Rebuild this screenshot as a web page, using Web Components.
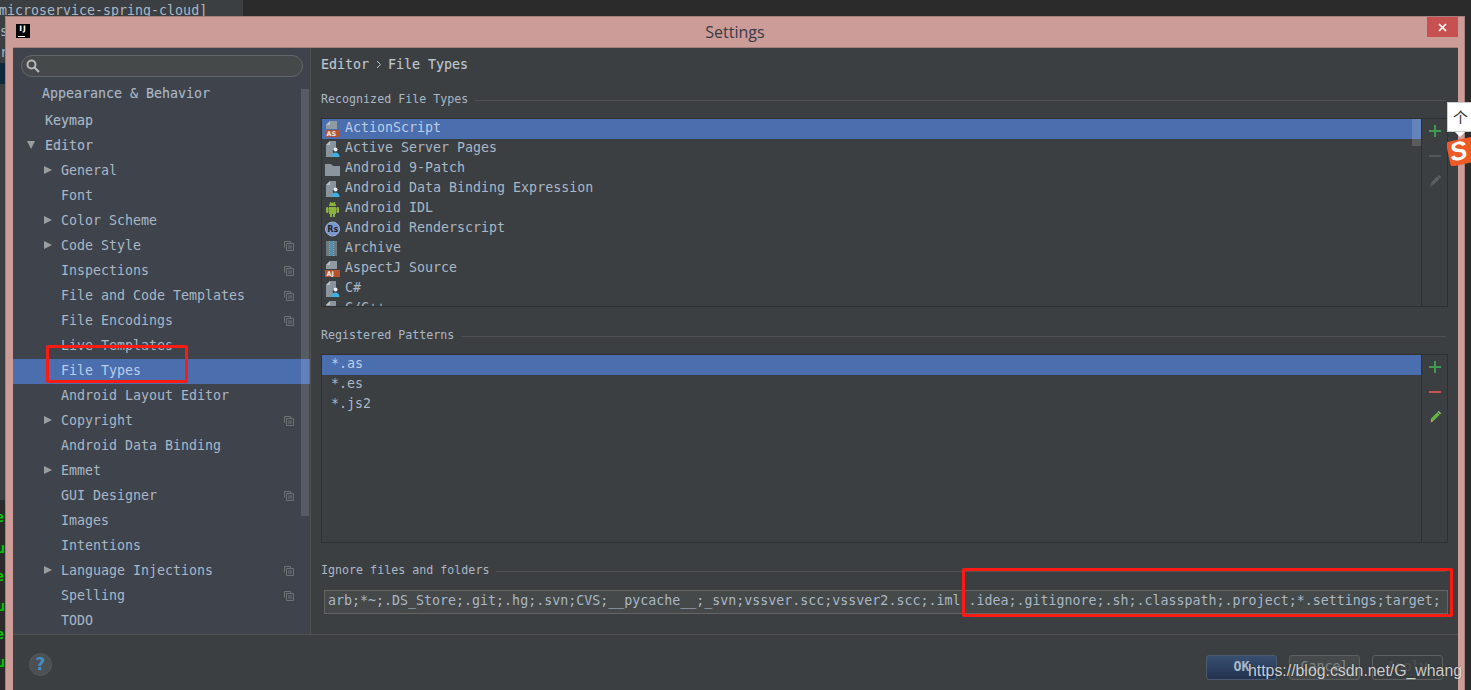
<!DOCTYPE html>
<html>
<head>
<meta charset="utf-8">
<title>Settings</title>
<style>
  html, body { margin: 0; height: 690px; overflow: hidden; background: #2b2b2b; }
  body { position: relative; font-family: "DejaVu Sans Mono", monospace; }
</style>
</head>
<body>
<ide-backdrop></ide-backdrop>
<settings-window>
  <settings-sidebar slot="sidebar"></settings-sidebar>
  <file-types-panel slot="panel"></file-types-panel>
  <dialog-footer slot="footer"></dialog-footer>
</settings-window>
<ime-badge></ime-badge>
<span-marker style="left:46px;top:345px;width:142px;height:38px"></span-marker>
<span-marker style="left:962px;top:568px;width:491px;height:49px"></span-marker>
<blog-watermark>https://blog.csdn.net/G_whang</blog-watermark>

<script>
const DOC = '<path d="M5 0h7v8H1V4z" fill="#8f9aa3"/><path d="M5 0v4H1z" fill="#b9c1c7"/>'
const PERSON_DOC = '<path d="M5 0h6v6.5a4 4 0 0 0-3 5.5v4H1V4z" fill="#8a949c"/><path d="M5 0v4H1z" fill="#b9c1c7"/><circle cx="10.5" cy="8.5" r="2" fill="#e8edf0"/><path d="M6.5 16c0-3 1.800-4.500 4-4.500s4 1.500 4 4.500z" fill="#3fb0e0"/>'
const label = t => `${DOC}<rect y="9" width="15" height="7" fill="#b4532e"/><text x="1.500" y="15" font-size="6.500" font-weight="bold" font-family="DejaVu Sans" fill="#e8e8e8">${t}</text>`
const ICONS = {
  as: `<svg width="16" height="16" viewBox="0 0 16 16">${label('AS')}</svg>`,
  aj: `<svg width="16" height="16" viewBox="0 0 16 16">${label('AJ')}</svg>`,
  server: `<svg width="16" height="16" viewBox="0 0 16 16">${PERSON_DOC}</svg>`,
  folder: `<svg width="16" height="16" viewBox="0 0 16 16"><path d="M0 3h6l2 2h7v10H0z" fill="#8a959e"/></svg>`,
  android: `<svg width="16" height="16" viewBox="0 0 16 16"><path d="M4 5a3.500 3.500 0 0 1 7 0z" fill="#8cb43c"/><path d="M5 1l1 2M10 1l-1 2" stroke="#8cb43c"/><rect x="4" y="6" width="7" height="7" fill="#8cb43c"/><rect x="1" y="6" width="2.500" height="6" rx="1.200" fill="#8cb43c"/><rect x="11.500" y="6" width="2.500" height="6" rx="1.200" fill="#8cb43c"/><rect x="5" y="12" width="2" height="4" fill="#8cb43c"/><rect x="8" y="12" width="2" height="4" fill="#8cb43c"/></svg>`,
  rs: `<svg width="16" height="16" viewBox="0 0 16 16"><circle cx="7.500" cy="8" r="7" fill="#7b98cc" stroke="#9cb0d4"/><text x="2.300" y="11" font-size="8" font-weight="bold" font-family="DejaVu Sans" fill="#20242c">Rs</text></svg>`,
  archive: `<svg width="16" height="16" viewBox="0 0 16 16"><rect x="1" width="11" height="15" fill="#6f7a80"/><rect x="5.500" width="2" height="15" fill="#2f9bd0"/><path d="M4.500 0v15M8.500 0v15" stroke="#5cc0ea" stroke-dasharray="1 1"/></svg>`
}

const SIDEBAR_ROWS = [
  { label: 'Appearance & Behavior', indent: 'a', bold: true },
  { label: 'Keymap', indent: 'top', bold: true },
  { label: 'Editor', indent: 'top', bold: true, open: true },
  { label: 'General', arrow: true },
  { label: 'Font' },
  { label: 'Color Scheme', arrow: true },
  { label: 'Code Style', arrow: true, copy: true },
  { label: 'Inspections', copy: true },
  { label: 'File and Code Templates', copy: true },
  { label: 'File Encodings', copy: true },
  { label: 'Live Templates' },
  { label: 'File Types', selected: true },
  { label: 'Android Layout Editor' },
  { label: 'Copyright', arrow: true, copy: true },
  { label: 'Android Data Binding' },
  { label: 'Emmet', arrow: true },
  { label: 'GUI Designer', copy: true },
  { label: 'Images' },
  { label: 'Intentions' },
  { label: 'Language Injections', arrow: true, copy: true },
  { label: 'Spelling', copy: true },
  { label: 'TODO' }
]

const FILE_TYPES = [
  ['as', 'ActionScript'],
  ['server', 'Active Server Pages'],
  ['folder', 'Android 9-Patch'],
  ['server', 'Android Data Binding Expression'],
  ['android', 'Android IDL'],
  ['rs', 'Android Renderscript'],
  ['archive', 'Archive'],
  ['aj', 'AspectJ Source'],
  ['server', 'C#'],
  ['server', 'C/C++']
]

class IdeBackdrop extends HTMLElement {
  constructor () {
    super()
    this.attachShadow({ mode: 'open' }).innerHTML = /* html */`
    <style>
      :host { display: block; position: absolute; inset: 0; overflow: hidden; }
      .tree { position: absolute; left: 0; top: 0; width: 243px; height: 100%; background: #3c3f41; }
      .line { position: absolute; left: 0; font: 13.3px/16px "DejaVu Sans Mono", monospace; color: #a9b7c6; white-space: nowrap; }
      .selected { position: absolute; left: 0; top: 63px; width: 5px; height: 21px; background: #0d293e; }
      .editor { position: absolute; left: 0; top: 500px; width: 5px; height: 190px; background: #2b2b2b; }
      .g { color: #00c800; font-weight: bold; }
    </style>
    <div class="tree"></div>
    <div class="selected"></div>
    <div class="editor"></div>
    <div class="line" style="top:3px;left:-1px">microservice-spring-cloud]</div>
    <div class="line" style="top:24px;left:0">s</div>
    <div class="line" style="top:45px;left:0">r</div>
    <div class="line g" style="top:510px;left:-4px">e</div>
    <div class="line g" style="top:541px;left:-3px">u</div>
    <div class="line g" style="top:569px;left:-4px">e</div>
    <div class="line g" style="top:599px;left:-3px">u</div>
    <div class="line g" style="top:627px;left:-4px">e</div>
    <div class="line g" style="top:655px;left:-3px">u</div>
    `
  }
}

class SettingsWindow extends HTMLElement {
  constructor () {
    super()
    this.attachShadow({ mode: 'open' }).innerHTML = /* html */`
    <style>
      :host {
        position: absolute; left: 5px; top: 16px; width: 1460px; height: 674px;
        box-sizing: border-box; display: flex; flex-direction: column;
        background: #cc9d98; border: 1px solid #a5807c; border-bottom: 0;
      }
      .title { height: 29px; flex: none; display: flex; align-items: center; justify-content: center; position: relative;
        font: 16px "Open Sans", sans-serif; color: #3a3a44; }
      .logo { position: absolute; left: 10px; top: 7px; width: 14px; height: 14px; background: #000; color: #fff;
        font: bold 7.5px/10px "DejaVu Sans", sans-serif; letter-spacing: 1px; text-align: center; }
      .logo i { position: absolute; left: 2px; bottom: 1px; width: 7px; height: 1px; background: #fff; }
      .close { position: absolute; right: 6px; top: 0; width: 31px; height: 20px; background: #c75050;
        display: flex; align-items: center; justify-content: center; }
      .body { flex: 1; min-height: 0; margin: 1px 6px 0 7px; border-top: 1px solid #a5807c; display: flex; flex-direction: column; background: #3c3f41; }
      .main { display: flex; height: 586px; flex: none; border-bottom: 1px solid #515151; }
    </style>
    <div class="title">
      <div class="logo">IJ<i></i></div>
      Settings
      <div class="close"><svg width="9" height="9" viewBox="0 0 9 9"><path d="M1 1l7 7M8 1l-7 7" stroke="#fff" stroke-width="1.700"/></svg></div>
    </div>
    <div class="body">
      <div class="main">
        <slot name="sidebar"></slot>
        <slot name="panel"></slot>
      </div>
      <slot name="footer"></slot>
    </div>
    `
  }
}

class SettingsSidebar extends HTMLElement {
  constructor () {
    super()
    const rows = SIDEBAR_ROWS.map(r => {
      const cls = ['row', r.selected ? 'sel' : '', r.indent === 'a' ? 'first' : '', r.indent === 'top' ? 'top' : '', r.bold ? 'bold' : ''].join(' ')
      let arrow = ''
      if (r.arrow) arrow = '<span class="arr"></span>'
      if (r.open) arrow = '<span class="down"></span>'
      const copy = r.copy ? `<svg class="copy" width="10" height="10" viewBox="0 0 10 10"><path d="M.5 6.500v-6h6v2" fill="none" stroke="#6e7276"/><path d="M2.500 2.500h7v7h-7z" fill="none" stroke="#6e7276"/><path d="M4 5h4M4 7h4" stroke="#6e7276"/></svg>` : ''
      return `<div class="${cls}">${arrow}<span>${r.label.replace('&', '&amp;')}</span>${copy}</div>`
    }).join('')
    this.attachShadow({ mode: 'open' }).innerHTML = /* html */`
    <style>
      :host { display: flex; flex-direction: column; width: 297px; height: 100%; flex: none; background: #3e434c; border-right: 1px solid #515151; position: relative; overflow: hidden;
        font: 13.3px "DejaVu Sans Mono", monospace; color: #a9b7c6; }
      .search { margin: 7px 7px 0 8px; height: 22px; flex: none; box-sizing: border-box; border: 1px solid #63676a; border-radius: 11px; background: #45494a; display: flex; align-items: center; padding-left: 4px; }
      .list { padding-top: 4px; }
      .row { height: 25px; box-sizing: border-box; padding-bottom: 2px; display: flex; align-items: center; padding-left: 48px; position: relative; white-space: nowrap; }
      .first { height: 28px; padding-left: 29px; padding-bottom: 3px; }
      .top { padding-left: 32px; }
      .bold { -webkit-text-stroke: .15px #a9b7c6; }
      .sel { background: #4b6eaf; color: #bbcde8; }
      .arr { position: absolute; left: 31px; top: 7px; border-left: 8px solid #9b9e9f; border-top: 4.5px solid transparent; border-bottom: 4.5px solid transparent; }
      .down { position: absolute; left: 14px; top: 7px; border-top: 8px solid #9b9e9f; border-left: 4.5px solid transparent; border-right: 4.5px solid transparent; }
      .copy { position: absolute; left: 271px; top: 7px; }
      .thumb { position: absolute; left: 288px; top: 41px; width: 8px; height: 427px; background: rgba(255,255,255,.13); }
    </style>
    <div class="search"><svg width="14" height="14" viewBox="0 0 14 14"><circle cx="5.500" cy="5.500" r="4" fill="none" stroke="#b5b8ba" stroke-width="2"/><path d="M8.500 8.500l4.500 4.500" stroke="#b5b8ba" stroke-width="2.200"/></svg></div>
    <div class="list">${rows}</div>
    <div class="thumb"></div>
    `
  }
}

class GroupTitle extends HTMLElement {
  constructor () {
    super()
    this.attachShadow({ mode: 'open' }).innerHTML = /* html */`
    <style>
      :host { display: flex; align-items: center; gap: 7px; font: 11.66px "DejaVu Sans Mono", monospace; color: #a9b7c6; height: 16px; white-space: nowrap; }
      i { flex: 1; height: 1px; background: #515151; margin: 2px 2px 0 0; }
    </style>
    <slot></slot><i></i>
    `
  }
}

class ToolList extends HTMLElement {
  constructor () {
    super()
    const active = this.hasAttribute('active')
    const minus = active ? '#c75450' : '#515658'
    const pencil = active
      ? '<path d="M3 9.500L10 2.500l2.500 2.500-7 7z" fill="#62b543"/><path d="M10.500 2l2.500 2.500 1-1L11.500 1z" fill="#9bd68a"/><path d="M3 9.500l2.500 2.500-2 1z" fill="#e8b060"/><path d="M2 13l1.500 0-1.500 1z" fill="#8a8a8a"/>'
      : '<path d="M3 9.500L10 2.500l2.500 2.500-7 7z" fill="#5c5f61"/><path d="M10.500 2l2.500 2.500 1-1L11.500 1z" fill="#66696b"/><path d="M3 9.500l2.500 2.500-3.500 2z" fill="#545759"/>'
    this.attachShadow({ mode: 'open' }).innerHTML = /* html */`
    <style>
      :host { display: flex; box-sizing: border-box; border: 1px solid #2e3032; font: 13.3px "DejaVu Sans Mono", monospace; color: #a9b7c6; }
      .items { flex: 1; min-width: 0; overflow: hidden; position: relative; }
      .tools { width: 25px; flex: none; border-left: 1px solid #2e3032; display: flex; flex-direction: column; align-items: center; gap: 11px; padding-top: 5px; }
      .tools svg { display: block; }
    </style>
    <div class="items"><slot></slot></div>
    <div class="tools">
      <svg width="14" height="14" viewBox="0 0 14 14"><path d="M7 1v12M1 7h12" stroke="#3e9b4f" stroke-width="2"/></svg>
      <svg width="14" height="14" viewBox="0 0 14 14"><path d="M1 7h12" stroke="${minus}" stroke-width="2"/></svg>
      <svg width="14" height="14" viewBox="0 0 15 15">${pencil}</svg>
    </div>
    `
  }
}

class FileTypeRow extends HTMLElement {
  constructor () {
    super()
    const icon = ICONS[this.getAttribute('icon')] || ''
    this.attachShadow({ mode: 'open' }).innerHTML = /* html */`
    <style>
      :host { display: flex; align-items: center; height: 20px; padding-left: 3px; gap: 4px; white-space: nowrap; }
      :host([selected]) { background: #4b6eaf; color: #bbcde8; }
      :host([plain]) { padding-left: 9px; }
      svg { flex: none; display: block; }
      .t { margin-bottom: 4px; }
    </style>
    ${icon}<span class="t"><slot></slot></span>
    `
  }
}

class FileTypesPanel extends HTMLElement {
  constructor () {
    super()
    const rows = FILE_TYPES.map((t, i) => `<file-type-row icon="${t[0]}" ${i === 0 ? 'selected' : ''}>${t[1]}</file-type-row>`).join('')
    this.attachShadow({ mode: 'open' }).innerHTML = /* html */`
    <style>
      :host { display: flex; flex-direction: column; flex: 1; min-width: 0; padding: 0 10px; height: 100%; box-sizing: border-box; font: 13.3px "DejaVu Sans Mono", monospace; color: #a9b7c6; overflow: hidden; position: relative; }
      .crumb { height: 16px; margin-top: 8px; display: flex; align-items: center; color: #bcc6cf; white-space: nowrap; -webkit-text-stroke: .15px #bcc6cf; }
      .crumb svg { margin: 0 6px 0 7px; }
      group-title { margin-top: 19px; }
      .recognized { height: 189px; margin-top: 11px; flex: none; }
      .recognized-inner { position: relative; }
      .thumb { position: absolute; right: 0; top: 0; width: 9px; height: 27px; background: rgba(255,255,255,.15); }
      .patterns { height: 189px; margin-top: 11px; flex: none; }
      .ignore { margin: 12px 0 0 3px; height: 24px; box-sizing: border-box; border: 1px solid #646464; background: #45494a; display: flex; align-items: center; padding: 0 0 4px 3px; white-space: pre; overflow: hidden; flex: none; color: #a9b7c6; }
    </style>
    <div class="crumb">Editor<svg width="6" height="9" viewBox="0 0 6 9"><path d="M1 1l3.500 3.500L1 8" fill="none" stroke="#bcc6cf"/></svg>File Types</div>
    <group-title>Recognized File Types</group-title>
    <tool-list class="recognized"><div class="recognized-inner">${rows}<div class="thumb"></div></div></tool-list>
    <group-title style="margin-top:20px">Registered Patterns</group-title>
    <tool-list class="patterns" active>
      <file-type-row plain selected>*.as</file-type-row>
      <file-type-row plain>*.es</file-type-row>
      <file-type-row plain>*.js2</file-type-row>
    </tool-list>
    <group-title style="margin-top:19px">Ignore files and folders</group-title>
    <div class="ignore">arb;*~;.DS_Store;.git;.hg;.svn;CVS;__pycache__;_svn;vssver.scc;vssver2.scc;.iml .idea;.gitignore;.sh;.classpath;.project;*.settings;target;</div>
    `
  }
}

class DialogFooter extends HTMLElement {
  constructor () {
    super()
    this.attachShadow({ mode: 'open' }).innerHTML = /* html */`
    <style>
      :host { display: flex; flex: 1; align-items: flex-end; position: relative; padding: 0 15px 10px 15px; font: 13.3px "DejaVu Sans Mono", monospace; }
      .help { position: absolute; left: 16px; top: 18px; width: 23px; height: 23px; box-sizing: border-box; border-radius: 50%; background: #4c5052; border: 1px solid #55595b; color: #3f8fc4; font: bold 17px/21px "DejaVu Sans", sans-serif; text-align: center; }
      .btns { margin-left: auto; display: flex; gap: 12px; }
      .btn { width: 71px; height: 25px; box-sizing: border-box; border: 1px solid #5e6060; border-radius: 3px; background: #3c3f41; color: #4f5456; display: flex; align-items: center; justify-content: center; padding-bottom: 3px; }
      .ok { background: linear-gradient(#384f70, #233350); color: #a9b7c6; font-weight: bold; border-color: #4b5a70; }
      .cancel { background: #45494a; color: #7d8285; }
    </style>
    <div class="help">?</div>
    <div class="btns">
      <div class="btn ok">OK</div>
      <div class="btn cancel">Cancel</div>
      <div class="btn">Apply</div>
    </div>
    `
  }
}

class SpanMarker extends HTMLElement {
  constructor () {
    super()
    this.attachShadow({ mode: 'open' }).innerHTML = /* html */`
    <style>
      :host { position: absolute; box-sizing: border-box; border: 3px solid #fb1b12; border-radius: 2px; pointer-events: none; }
    </style>
    `
  }
}

class ImeBadge extends HTMLElement {
  constructor () {
    super()
    this.attachShadow({ mode: 'open' }).innerHTML = /* html */`
    <style>
      :host { position: absolute; left: 1447px; top: 102px; width: 24px; height: 64px; overflow: hidden; }
      .tip { position: absolute; left: 0; top: 0; width: 30px; height: 30px; background: #fff; border: 1px solid #ccc; box-sizing: border-box; font: 15px/28px "Noto Sans CJK SC", sans-serif; color: #333; padding-left: 5px; }
      .arrow { position: absolute; left: 8px; top: 30px; border-top: 5px solid #fff; border-left: 5px solid transparent; border-right: 5px solid transparent; }
      .s { position: absolute; left: 1px; top: 37px; width: 30px; height: 25px; background: #ee5a24; border-radius: 3px; transform: rotate(-12deg); color: #fff; font: italic bold 26px/23px "Liberation Sans", sans-serif; padding-left: 2px; box-sizing: border-box; }
    </style>
    <div class="tip">个</div>
    <div class="arrow"></div>
    <div class="s">S</div>
    `
  }
}

class BlogWatermark extends HTMLElement {
  constructor () {
    super()
    this.attachShadow({ mode: 'open' }).innerHTML = /* html */`
    <style>
      :host { position: absolute; left: 1248px; top: 661px; font: 15.85px/20px "Liberation Sans", sans-serif; color: rgba(235,235,235,.85); text-shadow: 0 0 2px rgba(0,0,0,.45); white-space: nowrap; }
    </style>
    <slot></slot>
    `
  }
}

customElements.define('ide-backdrop', IdeBackdrop)
customElements.define('settings-window', SettingsWindow)
customElements.define('settings-sidebar', SettingsSidebar)
customElements.define('group-title', GroupTitle)
customElements.define('tool-list', ToolList)
customElements.define('file-type-row', FileTypeRow)
customElements.define('file-types-panel', FileTypesPanel)
customElements.define('dialog-footer', DialogFooter)
customElements.define('span-marker', SpanMarker)
customElements.define('ime-badge', ImeBadge)
customElements.define('blog-watermark', BlogWatermark)
</script>
</body>
</html>
